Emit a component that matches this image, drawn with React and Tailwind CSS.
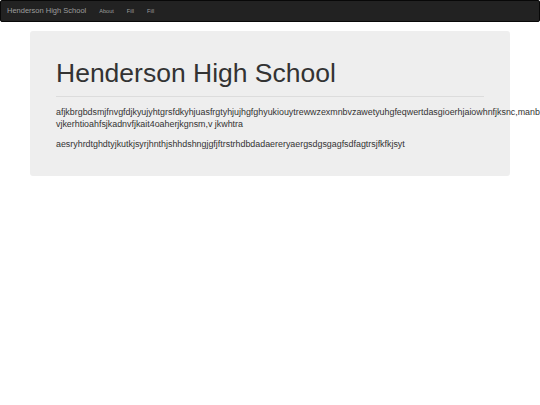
import React from 'react';

const NavBar = () => {
  return (
    <nav className="h-[22px] bg-[#222222] border border-[#080808] rounded-[2px] flex items-center">
      <a className="pl-[6px] pr-[6.5px] text-[7.5px] leading-[22px] text-[#9d9d9d]">Henderson High School</a>
      <ul className="flex items-center">
        <li><a className="block px-[6.5px] text-[5.6px] leading-[22px] text-[#9d9d9d]">About</a></li>
        <li><a className="block px-[6.5px] text-[5.6px] leading-[22px] text-[#9d9d9d]">Fill</a></li>
        <li><a className="block px-[6.5px] text-[5.6px] leading-[22px] text-[#9d9d9d]">Fill</a></li>
      </ul>
    </nav>
  );
};

const App = () => {
  return (
    <div className="min-h-[405px] overflow-x-hidden bg-white text-[#333333] font-['Liberation_Sans',Arial,sans-serif]">
      <NavBar />
      <div className="mt-[9px] mx-[30px] w-[480px] bg-[#eeeeee] rounded-[3px] px-[26px] pt-[21px] pb-[26px]">
        <h1 className="mt-[6.5px] mb-0 text-[26.5px] leading-[29px] font-normal text-[#333333]">Henderson High School</h1>
        <hr className="mt-[8.5px] mb-[9px] border-0 border-t border-[#dcdcdc]" />
        <p className="text-[8.9px] leading-[12.3px] mb-[7.6px]">
          afjkbrgbdsmjfnvgfdjkyujyhtgrsfdkyhjuasfrgtyhjujhgfghyukiouytrewwzexmnbvzawetyuhgfeqwertdasgioerhjaiowhnfjksnc,manbeqwrtyhjkasd vjkerhtioahfsjkadnvfjkait4oaherjkgnsm,v jkwhtra
        </p>
        <p className="text-[8.9px] leading-[12.3px]">
          aesryhrdtghdtyjkutkjsyrjhnthjshhdshngjgfjftrstrhdbdadaereryaergsdgsgagfsdfagtrsjfkfkjsyt
        </p>
      </div>
    </div>
  );
};

export default App;
